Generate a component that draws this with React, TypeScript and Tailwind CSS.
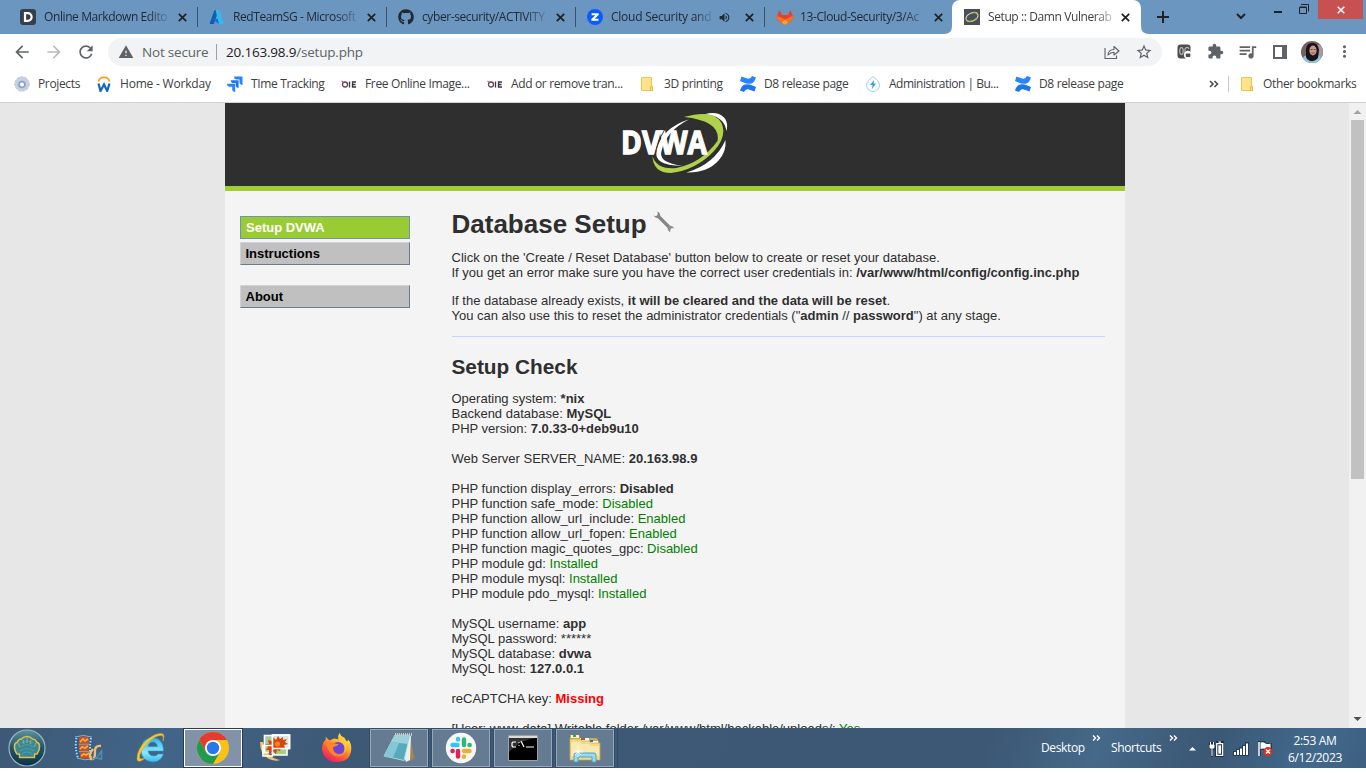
import React from "react";
import { FaGithub } from "react-icons/fa";
import {
  MdArrowBack,
  MdArrowForward,
  MdRefresh,
  MdWarning,
  MdExtension,
  MdQueueMusic,
  MdMoreVert,
  MdStarBorder,
  MdVolumeUp,
} from "react-icons/md";

type Icon = () => React.ReactElement;

const Dillinger: Icon = () => (
  <svg width="16" height="16" viewBox="0 0 16 16">
    <rect width="16" height="16" rx="3" fill="#373d49" />
    <path d="M5 4.200h2.800a3.800 3.800 0 0 1 0 7.600H5z" fill="none" stroke="#fff" strokeWidth="2.200" />
  </svg>
);
const Azure: Icon = () => (
  <svg width="16" height="16" viewBox="0 0 16 16">
    <path d="M5.500 1h4L5 15H1.500q-1 0-.7-1z" fill="#0f5fae" />
    <path d="M4 10h7l1 4.500H9z" fill="#0078d4" />
    <path d="M6.500 1h3.300q.6 0 .8.600l4 12.500q.2.900-.8.900H10z" fill="#35b8f1" />
  </svg>
);
const Github: Icon = () => <FaGithub size={16} color="#24292f" />;
const Zoom: Icon = () => (
  <svg width="16" height="16" viewBox="0 0 16 16">
    <circle cx="8" cy="8" r="8" fill="#0b5cff" />
    <path d="M4.600 5.200h6.300l-5.700 5.600h6.300" fill="none" stroke="#fff" strokeWidth="2" strokeLinejoin="round" />
  </svg>
);
const Gitlab: Icon = () => (
  <svg width="18" height="16" viewBox="0 0 18 16">
    <path d="M3.500 1 .8 8q-.5 2 1 3L9 16l7.200-5q1.500-1 1-3l-2.700-7L12 6H6z" fill="#e24329" />
    <path d="M.8 8q-.5 2 1 3L5.500 13.500 9 10.500 2.500 7.200Q1.500 7 .8 8m16.400 0q.5 2-1 3l-3.700 2.500-3.500-3 6.500-3.300q1-.2 1.700.8" fill="#fc6d26" />
    <path d="M5.500 13.500 9 10.500l3.500 3L9 16z" fill="#fca326" />
  </svg>
);
const Dvwa: Icon = () => (
  <svg width="16" height="16" viewBox="0 0 16 16">
    <rect width="16" height="16" fill="#4b4e58" />
    <g transform="rotate(-24 8 8)" fill="none">
      <ellipse cx="8" cy="8" rx="6.400" ry="4" stroke="#dce3c8" strokeWidth="1" />
      <path d="M2 9.500A6.400 4 0 0 0 12 11M9 4a6.400 4 0 0 1 5.300 4" stroke="#a8ca4c" strokeWidth="1.300" />
    </g>
  </svg>
);

const tabs: { title: string; icon: Icon; audio?: boolean }[] = [
  { title: "Online Markdown Edito", icon: Dillinger },
  { title: "RedTeamSG - Microsoft", icon: Azure },
  { title: "cyber-security/ACTIVITY", icon: Github },
  { title: "Cloud Security and", icon: Zoom, audio: true },
  { title: "13-Cloud-Security/3/Ac", icon: Gitlab },
];

const Cross = ({ size = 9, color = "#202124" }: { size?: number; color?: string }) => (
  <svg width={size} height={size} viewBox="0 0 9 9">
    <path d="m.8.800 7.400 7.400M8.200.800.800 8.200" stroke={color} strokeWidth="1.700" />
  </svg>
);

function TabStrip() {
  return (
    <div className="flex h-[34px] bg-[#6b96bf] pl-2 text-[12px] text-[#202b36]">
      {tabs.map((t) => (
        <div key={t.title} className="flex h-[34px] w-[189px] shrink-0 items-center pl-3">
          <span className="flex w-6 shrink-0">
            <t.icon />
          </span>
          <span
            className={`${t.audio ? "w-[102px] tracking-[-0.25px]" : "w-[126px] tracking-[-0.4px]"} shrink-0 whitespace-nowrap [mask-image:linear-gradient(to_right,black_82%,transparent_102%)]`}
          >
            {t.title}
          </span>
          {t.audio && (
            <span className="-ml-px mr-px flex w-6 shrink-0 justify-center">
              <MdVolumeUp size={13} />
            </span>
          )}
          <span className="flex flex-1 items-center justify-center pr-[3px]">
            <Cross />
          </span>
          <i className={`-mr-px h-5 w-px ${t.icon === Gitlab ? "" : "bg-[#37526c]"}`} />
        </div>
      ))}
      <div className="relative -ml-px flex w-[189px] shrink-0 items-center rounded-t-[8px] bg-white pl-3 text-[#3c4043]">
        <svg className="absolute -left-2 bottom-0" width="8" height="8">
          <path d="M8 0v8H0q8 0 8-8" fill="#fff" />
        </svg>
        <svg className="absolute -right-2 bottom-0" width="8" height="8">
          <path d="M0 0v8h8Q0 8 0 0" fill="#fff" />
        </svg>
        <span className="flex w-6 shrink-0">
          <Dvwa />
        </span>
        <span className="w-[125px] whitespace-nowrap tracking-[-0.4px] [mask-image:linear-gradient(to_right,black_85%,transparent_105%)]">
          Setup :: Damn Vulnerab
        </span>
        <span className="flex w-6 justify-center">
          <Cross />
        </span>
      </div>
      <div className="flex flex-1">
        <svg className="mt-[11px] ml-[16px]" width="12" height="12">
          <path d="M6 0v12M0 6h12" stroke="#202124" strokeWidth="2" />
        </svg>
        <svg className="mt-[13px] ml-[67px]" width="10" height="7" viewBox="0 0 10 7">
          <path d="m1 1 4 4 4-4" fill="none" stroke="#202124" strokeWidth="2" />
        </svg>
        <i className="mt-[11px] ml-[28px] h-[2px] w-2 bg-[#202124]" />
        <svg className="mt-1 ml-[17px]" width="10" height="10">
          <path d="M.5 3.500h7v6h-7zM.5 3h7M2 .5h7.500v7" fill="none" stroke="#202124" />
        </svg>
        <span className="ml-auto mr-[3px] flex h-[19px] w-[45px] items-center justify-center bg-[#c75050]">
          <Cross size={8} color="#fff" />
        </span>
      </div>
    </div>
  );
}

function Toolbar() {
  return (
    <div className="flex h-[35px] items-center bg-white text-[#5f6368]">
      <MdArrowBack size={20} className="ml-3" />
      <MdArrowForward size={20} color="#babcbe" className="ml-3" />
      <MdRefresh size={20} className="ml-3" />
      <div className="ml-3 flex h-7 w-[1054px] items-center rounded-full bg-[#f1f3f4] pl-[10px]">
        <MdWarning size={16} />
        <span className="ml-2 w-[67px] whitespace-nowrap pt-px text-[13.500px] tracking-[-0.2px]">Not secure</span>
        <i className="ml-[7px] h-4 w-px bg-[#9aa0a6]" />
        <span className="ml-[9px] whitespace-nowrap pt-px text-[13.500px] tracking-[-0.2px]">
          <b className="font-normal text-[#202124]">20.163.98.9</b>/setup.php
        </span>
        <svg className="ml-auto" width="16" height="16" viewBox="0 0 16 16" fill="none" stroke="#5f6368" strokeWidth="1.100">
          <path d="M1 4v10.500h11.500V11.500" />
          <path d="M4 11q.5-5.500 6-5.500V2.500l5 4.500-5 4V8.300q-3.500 0-6 2.700z" strokeLinejoin="round" />
        </svg>
        <MdStarBorder size={18} className="mr-[9px] ml-[15px]" />
      </div>
      <svg className="ml-[15px]" width="16" height="16" viewBox="0 0 16 16">
        <rect x=".5" y=".5" width="13" height="14" rx="3" fill="#4d4d4d" />
        <ellipse cx="4.500" cy="7" rx="1.700" ry="3.500" fill="none" stroke="#b8b8b8" strokeWidth="1.200" />
        <path d="M8 9V5q1-2 3-1.500l1 1.500" fill="none" stroke="#b8b8b8" strokeWidth="1.200" />
        <circle cx="11" cy="11" r="4.200" fill="#f8f8f8" />
        <rect x="8.800" y="9.500" width="4.500" height="3.500" rx=".7" fill="#4d4d4d" />
      </svg>
      <MdExtension size={17} className="ml-[14px]" />
      <MdQueueMusic size={21} className="ml-[13px]" />
      <svg className="ml-[15px]" width="14" height="14">
        <path d="M1 1h12v12H1z" fill="none" stroke="#5f6368" strokeWidth="2" />
        <path d="M9 1h4v12H9z" fill="#5f6368" />
      </svg>
      <svg className="ml-[14px]" width="22" height="22" viewBox="0 0 22 22">
        <clipPath id="avatar">
          <circle cx="11" cy="11" r="11" />
        </clipPath>
        <g clipPath="url(#avatar)">
          <path d="M0 0h22v22H0z" fill="#76605f" />
          <path d="M16 4h6v12h-6z" fill="#a49a9a" />
          <path d="M0 22q1-7 6-8l10 0q5 1 6 8z" fill="#8fc6dd" />
          <path d="M5 16V8q1-7 7-6 5 0 6 7l-1 8q-5 6-11 1z" fill="#17141a" />
          <ellipse cx="12" cy="9.500" rx="3.600" ry="5" fill="#c9998a" />
          <path d="M9.500 8.500h2M12.700 8.500h2M10.500 12h3" stroke="#5d3a35" strokeWidth=".8" />
        </g>
      </svg>
      <MdMoreVert size={19} className="ml-[12px]" />
    </div>
  );
}

const Chromium: Icon = () => (
  <svg width="16" height="16" viewBox="0 0 16 16">
    <circle cx="8" cy="8" r="7.200" fill="#c5d1e5" stroke="#b9c7dd" strokeDasharray="3 1" />
    <circle cx="8" cy="8.500" r="3.800" fill="#8ea3c4" />
    <circle cx="8" cy="8.500" r="2" fill="#fff" />
  </svg>
);
const Workday: Icon = () => (
  <svg width="16" height="16" viewBox="0 0 16 16" fill="none">
    <path d="M2.500 5.500a5.600 5 0 0 1 11 0" stroke="#f7a11a" strokeWidth="1.800" />
    <path d="m2.500 7.500 2 7.500L8 8.500l3.200 6.500 2.300-7.500" stroke="#1168bd" strokeWidth="2.200" />
  </svg>
);
const Jira: Icon = () => (
  <svg width="16" height="16" viewBox="0 0 16 16">
    <path d="M7 .5h8.500V9q-3-.5-3-3V3.500H10Q7 3.500 7 .5" fill="#2684ff" />
    <path d="M3.700 4.200h7.900V12q-2.900-.5-2.900-3V7H6.500Q3.700 7 3.700 4.200" fill="#1f78f0" />
    <path d="M0 7.700h8.200V16q-3-.5-3-3v-2.300H3Q0 10.700 0 7.700" fill="#2684ff" />
  </svg>
);
const Oie: Icon = () => (
  <svg width="16" height="16" viewBox="0 0 16 16" fill="none" strokeWidth="1.300">
    <circle cx="4" cy="8.500" r="2.500" stroke="#6c4055" />
    <path d="m.5 5 2 1.500" stroke="#d55b82" />
    <path d="M8.500 5.500v6" stroke="#3c3440" />
    <path d="M15 6h-3.500v5H15M11.500 8.500h3" stroke="#3c3440" />
  </svg>
);
const Folder: Icon = () => (
  <svg width="16" height="16" viewBox="0 0 16 16">
    <path d="M1.500 1.500h10v9.500l1 1v2.500h-11z" fill="#ffe38c" stroke="#e9c64f" />
    <path d="M10.500 14.500V11l2-.5v4z" fill="#ffe38c" stroke="#e9b93a" />
  </svg>
);
const Confluence: Icon = () => (
  <svg width="16" height="16" viewBox="0 0 16 16">
    <path d="M1.500.5 0 5l3.500 1.500q5 2 8.500.700Q14.500 6 16 1.500L12 0q-1.500 3.200-4 2.700Q5 2 1.500.5" fill="#2684ff" />
    <path d="m14.500 15.500 1.500-4.500-3.500-1.500q-5-2-8.500-.7Q1.500 10 0 14.500L4 16q1.500-3.200 4-2.700 3 .7 6.500 2.200" fill="#1f74ef" />
  </svg>
);
const Bolt: Icon = () => (
  <svg width="16" height="16" viewBox="0 0 16 16">
    <path d="M8 .7q6.500 4.500 6.500 8.500a6.500 6.300 0 0 1-13 0Q1.500 5.200 8 .7z" fill="#fff" stroke="#9bd2ee" />
    <path d="m9 4-4 5h2.500L7 13l4-5.500H8.500z" fill="#22a7df" />
  </svg>
);

const bookmarks: { label: string; icon: Icon; w: string }[] = [
  { label: "Projects", icon: Chromium, w: "w-[82px]" },
  { label: "Home - Workday", icon: Workday, w: "w-[131px] tracking-[-0.2px]" },
  { label: "TIme Tracking", icon: Jira, w: "w-[114px]" },
  { label: "Free Online Image...", icon: Oie, w: "w-[146px]" },
  { label: "Add or remove tran...", icon: Oie, w: "w-[153px]" },
  { label: "3D printing", icon: Folder, w: "w-[100px]" },
  { label: "D8 release page", icon: Confluence, w: "w-[125px]" },
  { label: "Administration | Bu...", icon: Bolt, w: "w-[150px] tracking-[-0.5px]" },
  { label: "D8 release page ", icon: Confluence, w: "w-[194px]" },
];

function BookmarkBar() {
  return (
    <div className="flex h-[34px] items-center border-b border-[#d0d0d0] bg-white pb-[3px] pl-[14px] text-[12px] tracking-[-0.35px] text-[#3c4043]">
      {bookmarks.map((b) => (
        <div key={b.label} className={`${b.w} flex shrink-0 items-center gap-2 whitespace-nowrap`}>
          <b.icon />
          <span>{b.label}</span>
        </div>
      ))}
      <svg width="10" height="8" fill="none" stroke="#4a4d51" strokeWidth="1.600">
        <path d="m1 1 3 3-3 3M5.500 1l3 3-3 3" />
      </svg>
      <i className="ml-[9px] h-4 w-px bg-[#c8cacc]" />
      <span className="ml-[11px] flex">
        <Folder />
      </span>
      <span className="ml-[7px] whitespace-nowrap">Other bookmarks</span>
    </div>
  );
}

function Logo() {
  return (
    <svg width="110" height="64" viewBox="0 0 110 64">
      <path d="M84 2.500Q97-1.500 104 5.500q4.500 5 2.500 13.500Q104 3 84 2.500" fill="#fff" />
      <path d="M69.300 7.300Q42 16 36.500 38 33 54 62.700 53.700 38 51 41.500 39 46 19 69.300 7.300" fill="#fff" />
      <path d="M105.500 28q1 12-7 20.500-11 12.500-32 12Q95 52 105.500 28" fill="#fff" />
      <path
        d="M64 5Q94-3 101.500 11q6 13-7.500 28-18 19-43 22-18 0-18.500-17 4 14 24 12 25-5 41-27Q101 9 64 5"
        fill="#b0d24a"
      />
      <g fontSize="32" fontWeight="700" fontFamily="Open Sans, sans-serif" fill="#fff" stroke="#fff" strokeWidth="1.300">
        <text x="1" y="42" textLength="86" lengthAdjust="spacingAndGlyphs">
          DVWA
        </text>
      </g>
      <path d="M44.500 18Q36 32 35.500 44" fill="none" stroke="#2f2f2f" strokeWidth=".9" />
    </svg>
  );
}

const Wrench: Icon = () => (
  <svg width="22" height="22" viewBox="0 0 22 22">
    <path d="m4.500 4.500 13 13" stroke="#858585" strokeWidth="3.200" />
    <path d="M4.500.600Q8 2.500 7 6 3 8.500.4 4.500l2.600.8 1.700-1.600z" fill="#858585" />
    <path d="M21.200 17.500q-1.500-4-5.700-2.400-2.500 3.200 1.500 6.400l.5-3.200 1.500-1.300z" fill="#8e8e8e" />
  </svg>
);

type Row = [string, string?, string?];
const rows: Row[] = [
  ["Operating system: ", "*nix", "b"],
  ["Backend database: ", "MySQL", "b"],
  ["PHP version: ", "7.0.33-0+deb9u10", "b"],
  [""],
  ["Web Server SERVER_NAME: ", "20.163.98.9", "b"],
  [""],
  ["PHP function display_errors: ", "Disabled", "b"],
  ["PHP function safe_mode: ", "Disabled", "g"],
  ["PHP function allow_url_include: ", "Enabled", "g"],
  ["PHP function allow_url_fopen: ", "Enabled", "g"],
  ["PHP function magic_quotes_gpc: ", "Disabled", "g"],
  ["PHP module gd: ", "Installed", "g"],
  ["PHP module mysql: ", "Installed", "g"],
  ["PHP module pdo_mysql: ", "Installed", "g"],
  [""],
  ["MySQL username: ", "app", "b"],
  ["MySQL password: ", "******", "n"],
  ["MySQL database: ", "dvwa", "b"],
  ["MySQL host: ", "127.0.0.1", "b"],
  [""],
  ["reCAPTCHA key: ", "Missing", "r"],
  [""],
  ["[User: www-data] Writable folder /var/www/html/hackable/uploads/: ", "Yes", "g"],
];
const tone: Record<string, string> = {
  b: "font-bold",
  g: "text-[#008000]",
  n: "",
  r: "font-bold text-[#f00]",
};

function Page() {
  return (
    <div className="flex h-[625px] overflow-hidden bg-[#e7e7e7] font-['Liberation_Sans',Arial,sans-serif]">
      <div className="ml-[225px] w-[900px] shrink-0 bg-[#f4f4f4]">
        <header className="flex h-[88px] justify-center border-b-[5px] border-[#a1cc33] bg-[#2f2f2f] pt-[9px]">
          <Logo />
        </header>
        <div className="flex">
          <nav className="ml-[15px] w-[170px] pt-[25px] text-[13px] leading-[21px] font-bold text-black">
            <div className="h-[23px] border border-[#7390b5] bg-[#9c3] pl-[5px] text-white">Setup DVWA</div>
            <div className="mt-[3px] h-[23px] border border-t-[#d2d2d2] border-r-[#6b7b94] border-b-[#6b7b94] border-l-[#d2d2d2] bg-[#c0c0c0] pl-[4.500px]">
              Instructions
            </div>
            <div className="mt-5 h-[23px] border border-t-[#d2d2d2] border-r-[#6b7b94] border-b-[#6b7b94] border-l-[#d2d2d2] bg-[#c0c0c0] pl-[4.500px]">
              About
            </div>
          </nav>
          <main className="ml-[41.500px] w-[653.500px] pt-[17px] text-[13px] leading-[15px] whitespace-nowrap text-[#2f2f2f]">
            <h1 className="flex h-8 items-center text-[26px] leading-8 font-bold">
              Database Setup
              <span className="mb-1 ml-[6px]">
                <Wrench />
              </span>
            </h1>
            <p className="mt-[10px]">
              Click on the 'Create / Reset Database' button below to create or reset your database.
              <br />
              If you get an error make sure you have the correct user credentials in:{" "}
              <b>/var/www/html/config/config.inc.php</b>
            </p>
            <p className="mt-[13px]">
              If the database already exists, <b>it will be cleared and the data will be reset</b>.
              <br />
              You can also use this to reset the administrator credentials ("<b>admin</b> // <b>password</b>") at any
              stage.
            </p>
            <hr className="mt-[13px] border-[#c0d8ff]" />
            <h2 className="mt-[18px] text-[20.800px] leading-6 font-bold">Setup Check</h2>
            <div className="mt-[12px]">
              {rows.map(([label, value, kind], i) => (
                <div key={i} className="h-[15px]">
                  {label}
                  {value && <span className={tone[kind ?? "n"]}>{value}</span>}
                </div>
              ))}
            </div>
          </main>
        </div>
      </div>
      <div className="ml-auto flex w-[17px] flex-col items-center justify-between bg-[#f1f1f1]">
        <svg width="17" height="17">
          <path d="m4.500 11 4-4 4 4z" fill="#a3a3a3" />
        </svg>
        <i className="mb-auto h-[359px] w-[13px] bg-[#c1c1c1]" />
        <svg width="17" height="17">
          <path d="m4.500 6 4 4 4-4z" fill="#505050" />
        </svg>
      </div>
    </div>
  );
}

const Shell: Icon = () => (
  <svg width="38" height="38" viewBox="0 0 38 38">
    <defs>
      <linearGradient id="orb" x2="0" y2="1">
        <stop stopColor="#5b929b" />
        <stop offset=".5" stopColor="#1f5366" />
        <stop offset="1" stopColor="#0b3347" />
      </linearGradient>
    </defs>
    <circle cx="19" cy="19" r="18" fill="url(#orb)" stroke="#9bb6c2" strokeWidth="1.200" />
    <path
      d="M11.500 28.500V25H9q-3-4-2.500-8 0-3 3-4 1-3 4-3 2-2.500 5.500-2.500t5.500 2.500q3 0 4 3 3 1 3 4 .5 4-2.500 8h-2.500v3.500z"
      fill="#3b8796"
      stroke="#e0bd4c"
      strokeWidth="1.500"
      strokeLinejoin="round"
    />
    <path
      d="M13 18q6-5 12 0M12 22q7-5 14 0M14 25q5-4 10 0M13.500 14q5.500-4 11 0"
      fill="none"
      stroke="#4f9ba7"
      strokeWidth="1.200"
    />
    <path d="m10 14 2 4m3-7 1 4m7-4-1 4m6-1-2 4m-7-9v5" stroke="#b9b458" strokeWidth=".8" />
  </svg>
);
const MovieMaker: Icon = () => (
  <svg width="32" height="28" viewBox="0 0 32 28">
    <path d="M2 3q8-3 17 0-2 11 0 22-8 2-15-1Q0 13 2 3" fill="#255f92" />
    <path d="M3.500 4q-2 9 1.500 20M18 4q-2 10 0 20" fill="none" stroke="#b4d6ec" strokeWidth="2" strokeDasharray="1.500 1.500" />
    <path d="M6 3.500q5-1.500 10 0l-.3 6H5.700zM5.700 11h10v6h-9.500zM6.500 18.500H16l.5 5.500q-5 1-9 0z" fill="#df4c10" />
    <path d="m7 8 3-3 2 2 3-2M7 15l2-2 3 1 3-2M8 22l3-2 2 1 3-2" stroke="#ffb037" strokeWidth="1.600" fill="none" />
    <path d="M2 3q8-3 17 0M5.700 10.200H17M5.700 17.700H17M4 24q8 3 15 1" fill="none" stroke="#8bc0e4" strokeWidth=".9" />
    <path d="M28 12q-7-1-6 7 0 7-4 6-3-4 2-10" fill="none" stroke="#f2bd72" strokeWidth="2.400" />
    <path d="M19 25q5 0 8-6l1.500-2v8l-6-1" fill="none" stroke="#4d8ebd" strokeWidth="1.500" />
  </svg>
);
const Explorer: Icon = () => (
  <svg width="32" height="32" viewBox="0 0 32 32">
    <defs>
      <linearGradient id="ie" x2="0" y2="1">
        <stop stopColor="#34b3e8" />
        <stop offset=".6" stopColor="#8de6ff" />
        <stop offset="1" stopColor="#3cb9ed" />
      </linearGradient>
    </defs>
    <path
      d="M17.500 5.500q11 1 11 13.500H13q1 5 6 5 3 0 4-2h5.500q-3 8-10.500 8Q6 29 6 17.500 7 6 17.500 5.500M13 14.500h9.500q-1-4.500-4.700-4.500T13 14.500"
      fill="url(#ie)"
      stroke="#2098ce"
      strokeWidth=".6"
    />
    <path
      d="M10 26q-7 6-8 1Q2 17 12 8 22 0 28 2q2 2 0 7 1-5-1-5.500-6-1-14 7Q4 20 4.500 26q1 2 5.500 0"
      fill="#f8cb32"
      stroke="#e0a71b"
      strokeWidth=".6"
    />
  </svg>
);
const Chrome: Icon = () => (
  <svg width="34" height="34" viewBox="0 0 34 34">
    <circle cx="17" cy="17" r="16" fill="#fbc116" />
    <path d="M3.140 9A16 16 0 0 1 30.860 9H17L10 21z" fill="#e33b2e" />
    <path d="M3.140 9A16 16 0 0 0 17 33l7-12-7 4-7-4z" fill="#229a4c" />
    <circle cx="17" cy="17" r="8" fill="#fff" />
    <circle cx="17" cy="17" r="6.200" fill="#2878ea" />
  </svg>
);
const Gallery: Icon = () => (
  <svg width="32" height="30" viewBox="0 0 32 30">
    <path d="M1 9q0 13 9 17 7 3 11 1-13-2-17-18z" fill="#f0c56c" />
    <path d="M5.500 2.500h12v17h-12z" fill="#a5c9a0" stroke="#fff" strokeWidth="1.600" />
    <path d="M15 10h13v12H15z" fill="#a6cd83" stroke="#fff" strokeWidth="1.600" />
    <path d="M13.500 2h17v13.500h-17z" fill="#d6e9e4" stroke="#fff" strokeWidth="1.600" />
    <path
      d="m19 3 2 3 3-2 0 3 4-1-2 3 3 2-4 1 1 3-4 0-1 3-3-1-1 4-3-2-4 2 0-4-3 0 2-3-3-3 4 0-1-4 4 1 1-4 3 3z"
      fill="#d84512"
    />
    <circle cx="18.500" cy="11" r="2.500" fill="#f18816" />
    <path d="M13.500 14v-12h17v13.500h-17M4 12.500h9.500V23H4z" fill="none" stroke="#fff" strokeWidth="1.600" />
  </svg>
);
const Firefox: Icon = () => (
  <svg width="32" height="34" viewBox="0 0 34 34">
    <defs>
      <linearGradient id="fx" x1=".8" y1="0" x2=".2" y2="1">
        <stop stopColor="#fff36a" />
        <stop offset=".35" stopColor="#ffb52d" />
        <stop offset=".65" stopColor="#ff5a38" />
        <stop offset="1" stopColor="#e51574" />
      </linearGradient>
    </defs>
    <path
      d="M20 1q1 4 5 6 1 2 3 3l1-2q4 5 3 12-2 12-15 12T1 19Q1 12 5 8V5l4 4 5-2q3 0 5 2-2-5 1-8"
      fill="url(#fx)"
    />
    <circle cx="18" cy="17.500" r="7" fill="#7042d8" />
    <path d="M5 11q4-2 8 1l6 1q-3 3-6 3-1 5 4 7 5 1 9-2-2 6-10 5-8-2-11-15z" fill="#ff852a" />
    <path d="M15 8q7-1 10 7 1 4-1 8 7-8 1-17l-6-3q2 5-4 5" fill="#ffcc31" />
  </svg>
);
const Notepad: Icon = () => (
  <svg width="34" height="32" viewBox="0 0 34 32">
    <path d="m28 5 4.500 21-4 3-5-2z" fill="#a88350" />
    <path d="m13 3 16 1-1 24-4 2z" fill="#e8f0ef" />
    <path d="M13 3h15l-6 25.500L2 24z" fill="#57a9bd" stroke="#c6e6e9" strokeWidth=".8" />
    <path d="M13 3h15l-2.500 9L9 10z" fill="#9ed0da" />
    <path d="M9 10 2 24l9 2 6-15z" fill="#84c8d5" />
    <path d="M13 2.500h17" stroke="#c9cccb" strokeWidth="3" strokeDasharray="1 1" />
  </svg>
);
const Slack: Icon = () => (
  <svg width="32" height="32" viewBox="0 0 32 32">
    <circle cx="16" cy="16" r="15.200" fill="#f7f7f7" />
    <g strokeWidth="4.400" strokeLinecap="round">
      <path d="M7.500 13h5M13 7v.5" stroke="#36c5f0" />
      <path d="M19 7.500V13M24.500 13h.2" stroke="#2eb67d" />
      <path d="M7.500 19h.2M13 19v5.500" stroke="#e01e5a" />
      <path d="M19 19h5.500M19 24.500v.2" stroke="#ecb22e" />
    </g>
  </svg>
);
const Terminal: Icon = () => (
  <svg width="30" height="26" viewBox="0 0 30 26">
    <path d="M.5.500h29v25H.500z" fill="#000" stroke="#9ba2aa" />
    <path d="M1 1h28v2H1z" fill="#dadada" />
    <path d="M1 14V3h28Q15 3 1 17" fill="#333" />
    <path d="M8 7H5L4 8v3l1 1h3M10.500 7.500h1M10.500 10.500h1M13 6l3 6M18 12h8" fill="none" stroke="#fff" strokeWidth="1.200" />
  </svg>
);
const Folders: Icon = () => (
  <svg width="34" height="32" viewBox="0 0 34 32">
    <path d="M2 3h9l1 3h17l2 4v18H2z" fill="#d5a849" />
    <path d="M3 3h8v3H3z" fill="#fff3c3" />
    <path d="M5 3h3v2H5z" fill="#1bb647" />
    <path d="M12 6h9v3h9v3H12z" fill="#fff" />
    <path d="M13 6h4v2h-4z" fill="#d44a1e" />
    <path d="M22 8h3v2h-3z" fill="#2376d8" />
    <path d="M2 7h10l2 2h7l2 2h9v17H2z" fill="#f4d985" stroke="#cca64f" strokeWidth=".7" />
    <path d="M3 10h9l2 2h7l2 2h8v10H3z" fill="#fae9ac" />
    <path d="M6 30v-7q0-2 2-2h18q2 0 2 2v7h-4v-5H10v5z" fill="#95dbf2" stroke="#579fc7" />
    <path d="M10 14v11M5 20h10M7 17l6 6M13 17l-6 6" stroke="#f5ffff" strokeWidth=".8" />
  </svg>
);

const pinned: Icon[] = [Shell, MovieMaker, Explorer, Chrome, Gallery, Firefox, Notepad, Slack, Terminal, Folders];
const frame = [
  "w-[54px]",
  "w-[70px]",
  "w-[54px] mr-[5px]",
  "w-[60px] border border-[#243d55] bg-[#8292a8] shadow-[inset_0_0_0_1px_#fff]",
  "w-[64px]",
  "w-[60px] mr-[2px]",
  "mr-[2px] w-[60px] border border-[#324e68] bg-[#657b92] shadow-[inset_0_0_0_1px_#98a7b7]",
  "mr-[2px] w-[60px] border border-[#324e68] bg-[#657b92] shadow-[inset_0_0_0_1px_#98a7b7]",
  "mr-[2px] w-[60px] border border-[#324e68] bg-[#657b92] shadow-[inset_0_0_0_1px_#98a7b7]",
  "w-[60px] border border-[#324e68] bg-[#657b92] shadow-[inset_0_0_0_1px_#98a7b7]",
];

const More = () => (
  <svg width="9" height="6" fill="none" stroke="#fff" strokeWidth="1.400">
    <path d="m1 .5 2.500 2.500L1 5.500M5 .5l2.500 2.500L5 5.500" />
  </svg>
);

function Taskbar() {
  return (
    <div className="flex h-10 bg-[linear-gradient(110deg,#3d5875_0%,#416588_12%,#3d5975_25%,#3c5874_72%,#456989_80%,#3b5875_88%,#41698d_96%,#3c5f80_100%)] text-[12px] tracking-[-0.35px] text-white">
      {pinned.map((App, i) => (
        <div key={i} className={`${frame[i]} flex h-10 shrink-0 items-center justify-center`}>
          <App />
        </div>
      ))}
      <i className="ml-[2px] w-px bg-[#304b65]" />
      <div className="ml-auto flex">
        <span className="mt-[11px] w-[51px] whitespace-nowrap">Desktop</span>
        <span className="mt-[7px] w-[19px]">
          <More />
        </span>
        <span className="mt-[11px] w-[58px] whitespace-nowrap">Shortcuts</span>
        <span className="mt-[7px] w-[19px]">
          <More />
        </span>
        <svg className="mt-[18px]" width="9" height="5">
          <path d="M1 4.500 4.500 1 8 4.500z" fill="#fff" />
        </svg>
        <svg className="mt-[13px] ml-[12px]" width="16" height="16" viewBox="0 0 16 16">
          <path d="M0 1h6v4h1V0h8v16H6V8L4 10v6H2V9L0 7z" fill="#1e3144" />
          <path d="M1.500 1v3M4.500 1v3M1 4h4v3H1zM3 7v8" fill="none" stroke="#fff" />
          <path d="M1 4h4v3H1z" fill="#fff" />
          <path d="M7.700 2.700h6v11.600h-6zM9.500 1.200h2.500" fill="none" stroke="#fff" strokeWidth="1.300" />
          <path d="M9.300 4.300h2.800v8.400H9.300z" fill="#fff" />
        </svg>
        <svg className="mt-[14px] ml-[8px]" width="16" height="14">
          <path d="M0 13V9h3V7h3V5h3V3h3V0h4v14H0z" fill="#263d54" />
          <path d="M2 13v-3M5 13V8M8 13V6.500M11 13V4M14 13V1.500" stroke="#fff" strokeWidth="2" />
        </svg>
        <svg className="mt-[13px] ml-[8px]" width="18" height="16">
          <path d="M1 0h7l1 2h6v9H9L8 9H4v6H1z" fill="#263b50" />
          <path d="M2 1v14" stroke="#fff" strokeWidth="1.500" />
          <path d="M3.500 1.500q3-1 5 1 2 1 5 0V9q-3 1-5-1-2-1-5 0z" fill="#fff" />
          <circle cx="11" cy="10.500" r="4.500" fill="#e02d20" />
          <path d="m9 8.500 4 4m0-4-4 4" stroke="#fff" strokeWidth="1.500" />
        </svg>
        <div className="ml-[11px] w-[58px] pt-[4px] text-center leading-[17px] tracking-[-0.3px] whitespace-nowrap">
          <div>2:53 AM</div>
          <div>6/12/2023</div>
        </div>
        <i className="w-[22px]" />
      </div>
    </div>
  );
}

export default function App() {
  return (
    <div className="h-[773px] w-[1366px] overflow-hidden bg-white font-['Open_Sans','Noto_Sans',sans-serif]">
      <TabStrip />
      <Toolbar />
      <BookmarkBar />
      <Page />
      <Taskbar />
    </div>
  );
}
